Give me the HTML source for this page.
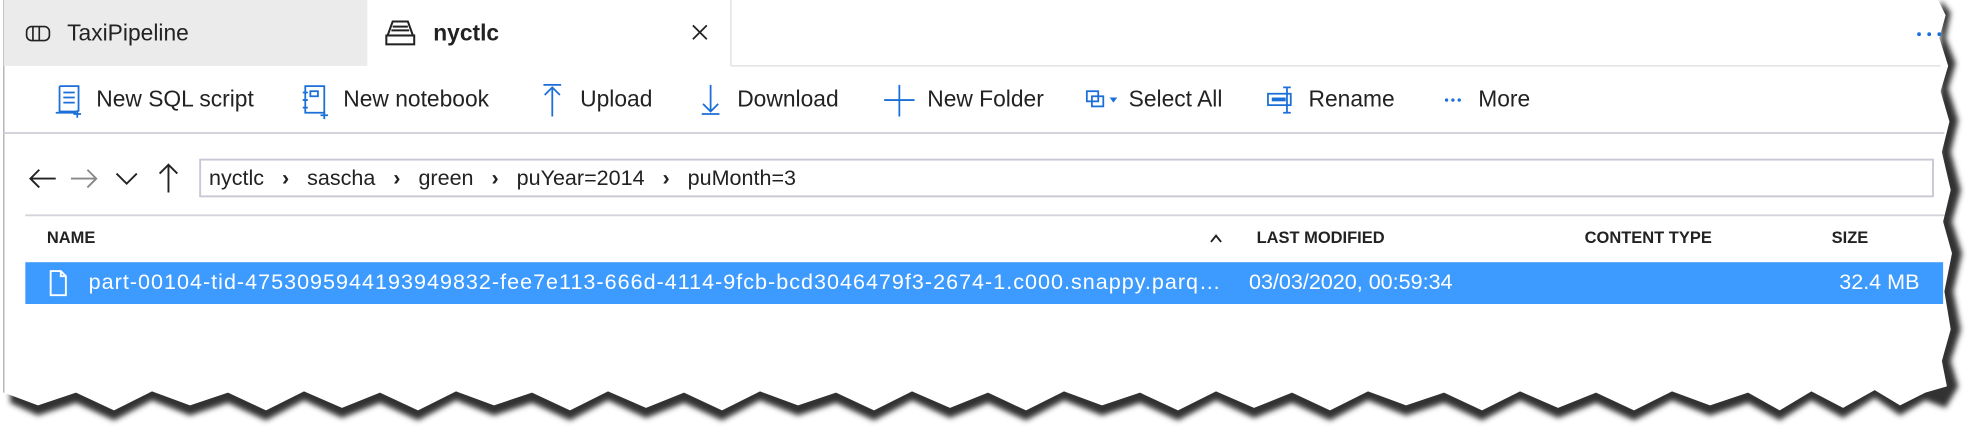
<!DOCTYPE html>
<html><head><meta charset="utf-8"><style>
html,body{margin:0;padding:0;background:#fff;width:1976px;height:434px;overflow:hidden}
#w{position:absolute;left:0;top:0;width:1560px;height:343px;transform:scale(1.2667);transform-origin:0 0;font-family:"Liberation Sans",sans-serif;color:#222}
.a{position:absolute;white-space:nowrap}
.tb{font-size:18px;top:68px}
.ic{position:absolute}
</style></head><body><div id="w">
<svg class="ic" style="left:0;top:0" width="1560" height="343">
<defs><filter id="b"><feGaussianBlur stdDeviation="2"/></filter></defs>
<polygon filter="url(#b)" fill="#333" points="1532,0 1540,10 1536,30 1544,50 1538,70 1546,95 1540,120 1548,150 1541,175 1549,200 1542,230 1548,260 1540,285 1546,305 1536,322 1520,316 1500,328 1480,314 1455,330 1430,316 1405,332 1380,318 1350,328 1320,316 1290,332 1260,318 1230,330 1200,316 1170,332 1140,318 1110,328 1080,316 1050,332 1020,318 990,330 960,316 930,332 900,318 870,328 840,316 810,332 780,318 750,330 720,316 690,332 660,318 630,328 600,316 570,332 540,318 510,330 480,316 450,332 420,318 390,328 360,316 330,332 300,318 270,330 240,316 210,332 180,318 150,328 120,316 90,332 60,318 30,328 8,318 8,300 1530,300"/>
<polygon fill="#fff" points="3,0 1530,0 1536,12 1531,30 1538,52 1532,72 1539,96 1533,120 1540,150 1534,175 1541,200 1535,230 1540,260 1533,285 1537,305 1520,310 1500,320 1480,308 1455,322 1430,309 1405,324 1380,310 1350,320 1320,309 1290,324 1260,310 1230,322 1200,309 1170,324 1140,310 1110,320 1080,309 1050,324 1020,310 990,322 960,309 930,324 900,310 870,320 840,309 810,324 780,310 750,322 720,309 690,324 660,310 630,320 600,309 570,324 540,310 510,322 480,309 450,324 420,310 390,320 360,309 330,324 300,310 270,322 240,309 210,324 180,310 150,320 120,309 90,324 60,310 30,320 3,310"/>
<line x1="3" y1="0" x2="3" y2="310" stroke="#aaa" stroke-width="1"/>
<rect x="3" y="0" width="287" height="52" fill="#ebebeb"/>
<line x1="577" y1="0" x2="577" y2="52" stroke="#ddd"/>
<line x1="577" y1="52" x2="1532" y2="52" stroke="#ddd"/>
<line x1="3" y1="105" x2="1535" y2="105" stroke="#d4d4dc" stroke-width="1.5"/>
<line x1="20" y1="170" x2="1535" y2="170" stroke="#d4d4dc" stroke-width="1.5"/>
<rect x="158" y="126" width="1368" height="29" fill="none" stroke="#c8c8d4" stroke-width="1.5"/>
<rect x="20" y="207" width="1514" height="33" fill="#3d9bff"/>
<g fill="none" stroke="#222" stroke-width="1.3"><rect x="21" y="21" width="18" height="11" rx="4"/><line x1="26" y1="21" x2="26" y2="32"/><line x1="31" y1="21" x2="31" y2="32"/></g>
<g fill="none" stroke="#222" stroke-width="1.6"><path d="M306 28 L310 17 H322 L326 28 Z"/><rect x="305" y="28" width="22" height="7"/><line x1="310" y1="21" x2="322" y2="21"/><line x1="309" y1="24" x2="323" y2="24"/></g>
<g stroke="#222" stroke-width="1.4"><line x1="547" y1="20" x2="558" y2="31"/><line x1="558" y1="20" x2="547" y2="31"/></g>
<g fill="#1a6fd8"><circle cx="1515" cy="27" r="1.5"/><circle cx="1523" cy="27" r="1.5"/><circle cx="1531" cy="27" r="1.5"/></g>
<g fill="none" stroke="#1a6fd8" stroke-width="1.4">
<path d="M47 68 H62 V88 M47 68 V88 H62 M44 89 H60 M50 73 H59 M50 77 H59 M50 81 H59"/><path d="M61 87 V93 M58 90 H64"/>
<rect x="241" y="68" width="15" height="21"/><rect x="245" y="72" width="6" height="4"/><path d="M239 73 H243 M239 79 H243 M239 85 H243 M256 88 V94 M253 91 H259"/>
<path d="M429 67 H443 M436 69 V92 M430 75 L436 69 L442 75"/>
<path d="M554 90 H568 M561 67 V88 M555 82 L561 88 L567 82"/>
<path d="M710 67 V92 M698 79 H722"/>
<rect x="858" y="72" width="9" height="8"/><rect x="862" y="76" width="9" height="8"/>
<rect x="1001" y="74" width="18" height="9"/><path d="M1016 69 V89 M1013 69 H1019 M1013 89 H1019"/>
</g>
<path d="M876 77 L882 77 L879 81 Z" fill="#1a6fd8"/>
<rect x="1004" y="77" width="11" height="3" fill="#1a6fd8"/>
<g fill="#1a6fd8"><circle cx="1142" cy="79" r="1.3"/><circle cx="1147" cy="79" r="1.3"/><circle cx="1152" cy="79" r="1.3"/></g>
<g fill="none" stroke-width="1.5"><path stroke="#222" d="M24 141 H44 M31 134 L24 141 L31 148"/><path stroke="#888" d="M56 141 H76 M69 134 L76 141 L69 148"/><path stroke="#222" d="M92 137 L100 145 L108 137"/><path stroke="#222" d="M133 130 V152 M126 137 L133 130 L140 137"/>
<path stroke="#222" d="M956 191 L960 186 L964 191"/>
<path stroke="#fff" d="M40 214 H48 L52 218 V233 H40 Z M48 214 V218 H52"/>
</g>
</svg>
<div class="a" style="left:53px;top:16px;font-size:18px">TaxiPipeline</div>
<div class="a" style="left:342px;top:16px;font-size:18px;font-weight:bold">nyctlc</div>
<div class="a tb" style="left:76px">New SQL script</div>
<div class="a tb" style="left:271px">New notebook</div>
<div class="a tb" style="left:458px">Upload</div>
<div class="a tb" style="left:582px">Download</div>
<div class="a tb" style="left:732px">New Folder</div>
<div class="a tb" style="left:891px">Select All</div>
<div class="a tb" style="left:1033px">Rename</div>
<div class="a tb" style="left:1167px">More</div>
<div class="a" style="left:165px;top:131px;font-size:17px">nyctlc&nbsp;&nbsp;&nbsp;<b>›</b>&nbsp;&nbsp;&nbsp;sascha&nbsp;&nbsp;&nbsp;<b>›</b>&nbsp;&nbsp;&nbsp;green&nbsp;&nbsp;&nbsp;<b>›</b>&nbsp;&nbsp;&nbsp;puYear=2014&nbsp;&nbsp;&nbsp;<b>›</b>&nbsp;&nbsp;&nbsp;puMonth=3</div>
<div class="a" style="left:37px;top:180px;font-size:13px;font-weight:bold">NAME</div>
<div class="a" style="left:992px;top:180px;font-size:13px;font-weight:bold">LAST MODIFIED</div>
<div class="a" style="left:1251px;top:180px;font-size:13px;font-weight:bold">CONTENT TYPE</div>
<div class="a" style="left:1446px;top:180px;font-size:13px;font-weight:bold">SIZE</div>
<div class="a" style="left:70px;top:213px;font-size:17px;letter-spacing:0.8px;color:#fff;width:897px;overflow:hidden;text-overflow:ellipsis">part-00104-tid-4753095944193949832-fee7e113-666d-4114-9fcb-bcd3046479f3-2674-1.c000.snappy.parquet</div>
<div class="a" style="left:986px;top:213px;font-size:17px;color:#fff">03/03/2020, 00:59:34</div>
<div class="a" style="left:1452px;top:213px;font-size:17px;color:#fff">32.4 MB</div>
</div></body></html>
